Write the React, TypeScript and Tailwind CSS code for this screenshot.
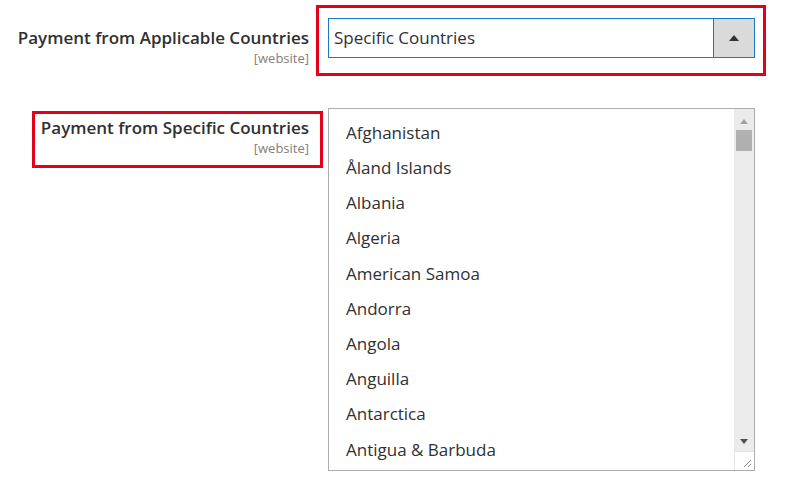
import React from "react";

const COUNTRIES = [
  "Afghanistan",
  "Åland Islands",
  "Albania",
  "Algeria",
  "American Samoa",
  "Andorra",
  "Angola",
  "Anguilla",
  "Antarctica",
  "Antigua & Barbuda",
];

const font = { fontFamily: '"Open Sans", "Liberation Sans", sans-serif' };

function Label({ title }: { title: string }) {
  return (
    <div className="text-right">
      <div className="text-[17px] font-semibold leading-[23px] text-[#303030]">{title}</div>
      <div className="text-[13px] leading-[18px] text-[#808080]">[website]</div>
    </div>
  );
}

export default function App() {
  return (
    <div className="w-[795px] h-[495px] bg-white overflow-hidden" style={font}>
      {/* applicable countries */}
      <div className="flex items-start pt-[5px]">
        <div className="w-[309px] shrink-0 pt-[21px]">
          <Label title="Payment from Applicable Countries" />
        </div>
        <div className="ml-[7px] w-[450px] h-[71px] border-[3px] border-[#e2001a] pl-[9px] pr-[8px] pt-[10px]">
          <div className="flex h-[40px] border border-[#1979c3]">
            <div className="flex-1 flex items-center pl-[5px] text-[17px] text-[#303030]">Specific Countries</div>
            <div className="w-[41px] flex items-center justify-center bg-[#dadada] border-l border-[#1979c3]">
              <svg width="10" height="6" viewBox="0 0 10 6">
                <path d="M5 0 L10 6 L0 6 Z" fill="#333" />
              </svg>
            </div>
          </div>
        </div>
      </div>

      {/* specific countries */}
      <div className="flex items-start mt-[32px]">
        <div className="ml-[32px] mt-[3px] w-[291px] h-[57px] shrink-0 border-[3px] border-[#e2001a] pr-[11px] pt-[2px]">
          <Label title="Payment from Specific Countries" />
        </div>
        <div className="ml-[5px] w-[427px] h-[363px] flex border border-[#adadad]">
          <div className="flex-1 pl-[17px] pt-[6px]">
            {COUNTRIES.map((c) => (
              <div key={c} className="h-[35.2px] flex items-center text-[17px] text-[#303030]">
                {c}
              </div>
            ))}
          </div>
          <div className="w-[20px] flex flex-col bg-[#ebebeb]">
            <div className="h-[20px] flex items-center justify-center pt-[4px]">
              <svg width="8" height="5" viewBox="0 0 8 5">
                <path d="M4 0 L8 5 L0 5 Z" fill="#a3a3a3" />
              </svg>
            </div>
            <div className="mx-[2px] mt-[1px] h-[21px] bg-[#b0b0b0]" />
            <div className="flex-1" />
            <div className="h-[20px] flex items-center justify-center">
              <svg width="8" height="5" viewBox="0 0 8 5">
                <path d="M0 0 L8 0 L4 5 Z" fill="#505050" />
              </svg>
            </div>
            <div className="h-[19px] bg-white border-t border-l border-[#e4e4e4] flex items-end justify-end p-[2px]">
              <svg width="10" height="10" viewBox="0 0 10 10">
                <path d="M9 2 L2 9 M9 6 L6 9" stroke="#8a8a8a" strokeWidth="1" />
              </svg>
            </div>
          </div>
        </div>
      </div>
    </div>
  );
}
